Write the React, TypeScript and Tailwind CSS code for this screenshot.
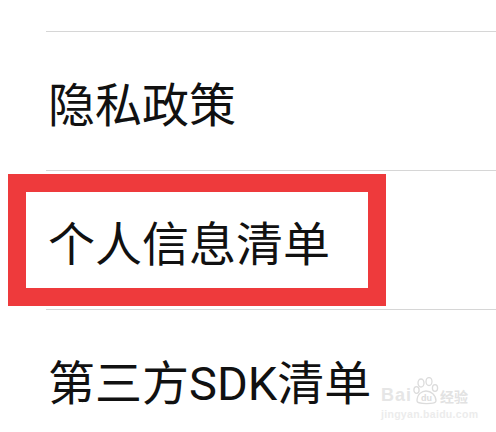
import React from "react";

const items = ["隐私政策", "个人信息清单", "第三方SDK清单"];

function Paw() {
  return (
    <svg width="26" height="28" viewBox="0 0 26 28" fill="none" stroke="#dcdcdc" strokeWidth="1.3">
      <ellipse cx="8" cy="6" rx="3" ry="4" />
      <ellipse cx="16" cy="4.5" rx="3" ry="4" />
      <ellipse cx="3.5" cy="13" rx="2.6" ry="3.4" />
      <ellipse cx="22" cy="11" rx="2.6" ry="3.4" />
      <path d="M4 24 C4 17 9 14 13 14 C18 14 23 18 23 24 C23 27.5 4 27.5 4 24 Z" />
      <text x="13.5" y="24" textAnchor="middle" fontSize="9" fontWeight="700" fill="#dcdcdc" stroke="none" fontFamily="Liberation Sans, sans-serif">du</text>
    </svg>
  );
}

export default function App() {
  return (
    <div
      className="relative w-[496px] h-[432px] overflow-hidden bg-white text-[#111111]"
      style={{ fontFamily: 'Roboto, "Noto Sans CJK SC", "Noto Sans", sans-serif' }}
    >
      <div className="pt-[31px] pl-[46px]">
        {items.map((t) => (
          <div
            key={t}
            className="h-[139px] border-t border-[#d6d6d6] flex items-center pl-[2px] pt-[9px]"
          >
            <span className="text-[47px] leading-none font-normal">{t}</span>
          </div>
        ))}
      </div>

      <div className="absolute left-[8px] top-[174px] w-[378px] h-[132px] border-[18px] border-[#ee3a3c]" />

      <div className="absolute left-[381px] top-[377px] flex flex-col items-start">
        <div className="flex items-end gap-[1px]">
          <span
            className="text-[18px] leading-none font-bold text-[#e6e6e6] tracking-[1px] mb-[1px]"
            style={{ fontFamily: '"Liberation Sans", sans-serif' }}
          >
            Bai
          </span>
          <Paw />
          <span className="text-[14px] leading-none font-bold text-[#e2e2e2] mb-[1px]">经验</span>
        </div>
        <span
          className="mt-[4px] text-[10.5px] leading-none font-bold text-[#ececec] tracking-[0.3px]"
          style={{ fontFamily: '"Liberation Sans", sans-serif' }}
        >
          jingyan.baidu.com
        </span>
      </div>
    </div>
  );
}
